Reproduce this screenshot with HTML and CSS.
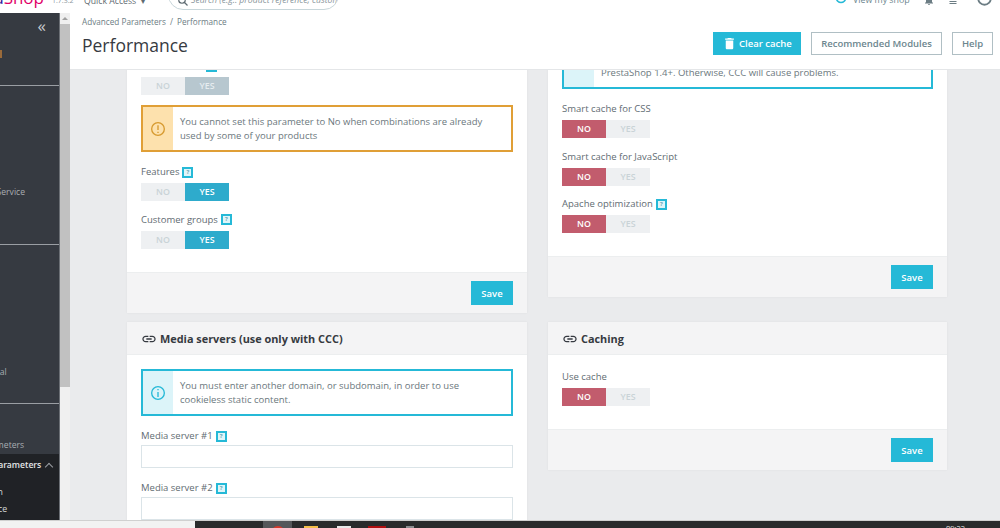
FILE: index.html
```html
<!DOCTYPE html>
<html lang="en">
<head>
<meta charset="utf-8">
<title>Performance</title>
<link rel="stylesheet" href="styles.css">
</head>
<body>
<div class="window">
  <div class="topbar">
    <div class="logo">Presta<span class="logo-pink">Shop</span></div>
    <div class="version">1.7.3.2</div>
    <div class="quick">Quick Access <span class="caret">▾</span></div>
    <div class="search">
      <svg class="search-icon" viewBox="0 0 24 24"><circle cx="10" cy="10" r="6.5"/><path d="M15 15l6 6"/></svg>
      <span class="search-text">Search (e.g.: product reference, custome</span>
    </div>
    <div class="top-right">
      <svg class="view-icon" viewBox="0 0 24 24"><circle cx="12" cy="12" r="9"/></svg>
      <span class="view-text">View my shop</span>
      <svg class="bell-icon" viewBox="0 0 24 24"><path d="M12 22a2 2 0 0 0 2-2h-4a2 2 0 0 0 2 2zm6-6v-5c0-3-1.6-5.600-4.500-6.300V2h-3v2.700C7.600 5.400 6 8 6 11v5l-2 2v1h16v-1z"/></svg>
      <svg class="user-icon" viewBox="0 0 24 24"><circle cx="12" cy="7" r="4"/><path d="M5 14h14v2H5zM5 18h14v2H5z"/></svg>
      <svg class="account-icon" viewBox="0 0 24 24"><circle cx="12" cy="12" r="10"/></svg>
    </div>
  </div>

  <div class="work">
    <aside class="sidebar">
      <div class="nav-sec nav-sec-first">
        <div class="collapse">«</div>
        <div class="dash-dot"></div>
      </div>
      <div class="nav-sec nav-sec-sell">
        <div class="nav-item">Orders</div>
        <div class="nav-item">Catalog</div>
        <div class="nav-item">Customers</div>
        <div class="nav-item">Customer Service</div>
        <div class="nav-item">Stats</div>
      </div>
      <div class="nav-sec nav-sec-improve">
        <div class="nav-item">Modules</div>
        <div class="nav-item">Design</div>
        <div class="nav-item">Shipping</div>
        <div class="nav-item">Payment</div>
        <div class="nav-item">International</div>
      </div>
      <div class="nav-config">
        <div class="nav-item">Shop Parameters</div>
        <div class="nav-active">
          <div class="nav-parent">Advanced Parameters <span class="chev"></span></div>
          <div class="nav-sub nav-sub-first">Information</div>
          <div class="nav-sub">Performance</div>
        </div>
      </div>
    </aside>

    <div class="scrollbar">
      <div class="scroll-up"></div>
      <div class="scroll-thumb"></div>
    </div>

    <div class="page">
      <header class="head">
        <div class="head-left">
          <div class="crumbs">Advanced Parameters <span class="crumb-sep">/</span> Performance</div>
          <h1 class="title">Performance</h1>
        </div>
        <div class="head-actions">
          <button class="btn btn-clear"><svg class="trash" viewBox="0 0 24 24"><path d="M6 19c0 1.100.9 2 2 2h8c1.100 0 2-.9 2-2V7H6v12zM19 4h-3.500l-1-1h-5l-1 1H5v2h14V4z"/></svg>Clear cache</button>
          <button class="btn btn-outline btn-modules">Recommended Modules</button>
          <button class="btn btn-outline btn-help">Help</button>
        </div>
      </header>

      <main class="columns">
        <div class="col col-left">
          <section class="card card-features">
            <div class="card-body">
              <div class="field">
                <div class="label">Combinations <span class="help">?</span></div>
                <div class="toggle"><span class="opt">NO</span><span class="opt opt-muted">YES</span></div>
              </div>
              <div class="alert alert-warn">
                <div class="alert-side"><svg class="alert-icon" viewBox="0 0 24 24"><circle cx="12" cy="12" r="9.500"/><path d="M12 6.500v7M12 16v2"/></svg></div>
                <p class="alert-text">You cannot set this parameter to No when combinations are already used by some of your products</p>
              </div>
              <div class="field">
                <div class="label">Features <span class="help">?</span></div>
                <div class="toggle"><span class="opt">NO</span><span class="opt opt-yes">YES</span></div>
              </div>
              <div class="field">
                <div class="label">Customer groups <span class="help">?</span></div>
                <div class="toggle"><span class="opt">NO</span><span class="opt opt-yes">YES</span></div>
              </div>
            </div>
            <div class="card-foot"><button class="save">Save</button></div>
          </section>

          <section class="card">
            <h2 class="card-head"><svg class="link" viewBox="0 0 24 24"><path d="M3.900 12c0-1.710 1.390-3.100 3.100-3.100h4V7H7c-2.760 0-5 2.240-5 5s2.240 5 5 5h4v-1.900H7c-1.710 0-3.100-1.390-3.100-3.100zM8 13h8v-2H8v2zm9-6h-4v1.900h4c1.710 0 3.100 1.390 3.100 3.100s-1.390 3.100-3.100 3.100h-4V17h4c2.760 0 5-2.240 5-5s-2.240-5-5-5z"/></svg>Media servers (use only with CCC)</h2>
            <div class="card-body card-body-open">
              <div class="alert alert-info alert-first">
                <div class="alert-side"><svg class="alert-icon" viewBox="0 0 24 24"><circle cx="12" cy="12" r="9.500"/><path d="M12 10.500V18M12 6v2"/></svg></div>
                <p class="alert-text">You must enter another domain, or subdomain, in order to use cookieless static content.</p>
              </div>
              <div class="field field-input">
                <div class="label">Media server #1 <span class="help">?</span></div>
                <input class="input" type="text">
              </div>
              <div class="field field-input">
                <div class="label">Media server #2 <span class="help">?</span></div>
                <input class="input" type="text">
              </div>
            </div>
          </section>
        </div>

        <div class="col col-right">
          <section class="card card-ccc">
            <div class="card-body">
              <div class="alert alert-info">
                <div class="alert-side"></div>
                <p class="alert-text">Make sure, however, that your theme is compatible with<br>PrestaShop 1.4+. Otherwise, CCC will cause problems.</p>
              </div>
              <div class="field">
                <div class="label">Smart cache for CSS</div>
                <div class="toggle"><span class="opt opt-no">NO</span><span class="opt">YES</span></div>
              </div>
              <div class="field">
                <div class="label">Smart cache for JavaScript</div>
                <div class="toggle"><span class="opt opt-no">NO</span><span class="opt">YES</span></div>
              </div>
              <div class="field">
                <div class="label">Apache optimization <span class="help">?</span></div>
                <div class="toggle"><span class="opt opt-no">NO</span><span class="opt">YES</span></div>
              </div>
            </div>
            <div class="card-foot"><button class="save">Save</button></div>
          </section>

          <section class="card">
            <h2 class="card-head"><svg class="link" viewBox="0 0 24 24"><path d="M3.900 12c0-1.710 1.390-3.100 3.100-3.100h4V7H7c-2.760 0-5 2.240-5 5s2.240 5 5 5h4v-1.900H7c-1.710 0-3.100-1.390-3.100-3.100zM8 13h8v-2H8v2zm9-6h-4v1.900h4c1.710 0 3.100 1.390 3.100 3.100s-1.390 3.100-3.100 3.100h-4V17h4c2.760 0 5-2.240 5-5s-2.240-5-5-5z"/></svg>Caching</h2>
            <div class="card-body card-body-caching">
              <div class="field">
                <div class="label">Use cache</div>
                <div class="toggle"><span class="opt opt-no">NO</span><span class="opt">YES</span></div>
              </div>
            </div>
            <div class="card-foot"><button class="save">Save</button></div>
          </section>
        </div>
      </main>
    </div>
  </div>

  <div class="statusline">
    <div class="status-blank"></div>
    <div class="taskbar">
      <div class="task task-active"><span class="dot-red"></span></div>
      <div class="task"><span class="tile tile-yellow"></span></div>
      <div class="task"><span class="tile tile-white"></span></div>
      <div class="task"><span class="tile tile-red"></span></div>
      <div class="task"><span class="tile tile-grey"></span></div>
      <div class="clock">09:22</div>
    </div>
  </div>
</div>
</body>
</html>
```

FILE: styles.css
```css
* { box-sizing: border-box; }
html, body { margin: 0; padding: 0; }
body { background: #fff; font-family: "Open Sans", "Noto Sans", sans-serif; color: #5f6b72; }
.window { width: 1000px; height: 528px; display: flex; flex-direction: column; overflow: hidden; }

/* top bar, cut by the top edge of the capture */
.topbar { height: 13px; flex: none; display: flex; align-items: flex-end; overflow: hidden; background: #fff; white-space: nowrap; }
.logo { flex: none; width: 52px; height: 22px; line-height: 22px; display: flex; justify-content: flex-end; padding-right: 8px; font-size: 17px; font-family: "Open Sans", sans-serif; color: #34219e; overflow: hidden; position: relative; top: -4px; }
.logo-pink { color: #df0067; }
.version { flex: none; width: 32px; font-size: 7px; color: #8a969c; line-height: 12px; position: relative; top: -6px; }
.quick { flex: none; width: 84px; font-size: 8.700px; color: #5f6b72; line-height: 12px; position: relative; top: -6px; }
.caret { font-size: 8px; margin-left: 2px; }
.search { flex: none; width: 171px; height: 30px; display: flex; align-items: flex-end; padding: 0 0 3px 8px; border: 1px solid #c8d6da; border-radius: 15px; position: relative; top: -3px; overflow: hidden; }
.search-icon { width: 12px; height: 12px; flex: none; fill: none; stroke: #5f6b72; stroke-width: 2.4; margin-right: 2px; margin-bottom: -1px; }
.search-text { font-size: 8.700px; font-style: italic; color: #8b979d; line-height: 12px; }
.top-right { flex: none; width: 661px; display: flex; align-items: center; height: 12px; position: relative; top: -7px; }
.view-icon { width: 12px; height: 12px; margin-left: 496px; margin-top: -5px; fill: none; stroke: #25b9d7; stroke-width: 3.4; }
.view-text { font-size: 8.800px; color: #6c868e; margin-left: 6px; width: 70px; }
.bell-icon { width: 12px; height: 12px; fill: #6c7d84; }
.user-icon { width: 12px; height: 12px; fill: #6c7d84; margin-left: 12px; }
.account-icon { width: 15px; height: 15px; fill: none; stroke: #6c7d84; stroke-width: 3; margin-left: 18px; margin-top: -4px; }

/* working area */
.work { flex: none; height: 507px; display: flex; }

.sidebar { flex: none; width: 60px; background: #363a41; overflow: hidden; display: flex; flex-direction: column; white-space: nowrap; border-right: 1px solid #6b6f75; }
.nav-sec { flex: none; border-bottom: 1px solid #9a9ea3; }
.nav-sec-first { height: 73px; }
.collapse { text-align: right; padding-right: 13px; font-size: 17px; line-height: 26px; height: 28px; color: #c6cace; }
.dash-dot { width: 2px; height: 8px; margin-top: 9px; background: #9a6a3a; }
.nav-sec-sell { height: 159px; padding-top: 12px; }
.nav-sec-improve { height: 159px; padding-top: 6px; }
.nav-item { height: 27px; line-height: 27px; margin-left: -45px; font-size: 8.600px; color: #a9adb1; }
.nav-config { flex: 1; padding-top: 28px; display: flex; flex-direction: column; }
.nav-active { flex: 1; background: #202226; margin-top: -5px; padding-top: 1px; }
.nav-parent { height: 20px; line-height: 20px; margin-left: -50px; font-size: 8.600px; font-weight: 600; color: #e4e6e8; display: flex; align-items: center; gap: 5px; }
.chev { width: 6px; height: 6px; border-top: 1px solid #9a9ea3; border-left: 1px solid #9a9ea3; transform: rotate(45deg); margin-top: 3px; flex: none; }
.nav-sub { height: 17px; line-height: 17px; margin-left: -46px; font-size: 8.800px; color: #d6d8da; }
.nav-sub-first { margin-top: 9px; }

.scrollbar { flex: none; width: 10px; background: #f0f0f0; display: flex; flex-direction: column; }
.scroll-up { height: 11px; background: #efefef; }
.scroll-up::before { content: ""; display: block; width: 0; height: 0; margin: 4px auto 0; border-left: 3px solid transparent; border-right: 3px solid transparent; border-bottom: 3px solid #a0a0a0; }
.scroll-thumb { height: 363px; background: #c1c1c1; }

.page { flex: 1; min-width: 0; display: flex; flex-direction: column; background: #eaebed; }
.head { flex: none; height: 57px; background: #fff; display: flex; justify-content: space-between; padding: 0 7px 0 12px; border-bottom: 1px solid #e4e6e8; position: relative; z-index: 1; }
.head-left { padding-top: 2px; }
.crumbs { font-size: 8.200px; line-height: 14px; color: #6c7d84; }
.crumb-sep { margin: 0 2px; }
.title { margin: 3px 0 0; font-size: 17.500px; line-height: 26px; font-weight: 400; color: #363a41; }
.head-actions { display: flex; gap: 10px; padding-top: 19px; }
.btn { height: 23px; padding: 0 10px; font-family: inherit; font-size: 9.500px; font-weight: 600; display: flex; align-items: center; border-radius: 0; white-space: nowrap; }
.btn-clear { width: 88px; padding: 0 0 0 9px; background: #25b9d7; border: 0; color: #fff; }
.btn-modules { width: 131px; padding: 0; justify-content: center; }
.btn-help { width: 41px; padding: 0; justify-content: center; }
.trash { width: 15px; height: 15px; fill: #fff; flex: none; margin-right: 2px; }
.btn-outline { background: #fff; border: 1px solid #b0bfc4; color: #6c868e; }

.columns { flex: 1; min-height: 0; overflow: hidden; display: grid; grid-template-columns: 400px 399px; column-gap: 21px; align-items: start; padding-left: 57px; }
.col { display: flex; flex-direction: column; }
.col-left { margin-top: -14px; }
.col-right { margin-top: -28px; }
.card { background: #fff; box-shadow: 0 0 2px rgba(0,0,0,.06); flex: none; }
.card-features { margin-bottom: 9px; }
.card-ccc { margin-bottom: 25px; }
.card-head { margin: 0; height: 33px; display: flex; align-items: center; padding: 1px 0 0 14px; background: #f4f4f5; border-bottom: 1px solid #eceeef; font-size: 10.900px; font-weight: 700; color: #363a41; }
.link { width: 16px; height: 16px; margin-right: 3px; fill: #363a41; flex: none; }
.card-body { padding: 12px 14px 15px; }
.card-features .card-body { padding-top: 0; padding-bottom: 15px; }
.card-ccc .card-body { padding-top: 0; padding-bottom: 14.500px; }
.card-body-caching { padding-bottom: 14.500px; }
.card-body-open { padding-bottom: 60px; }
.card-foot { height: 41px; background: #f4f4f5; border-top: 1px solid #eceeef; display: flex; justify-content: flex-end; align-items: flex-start; padding: 8px 14px 0 0; }
.save { width: 42px; height: 24px; border: 0; background: #25b9d7; color: #fff; font-family: inherit; font-size: 9.500px; font-weight: 600; padding: 0; }

.field { margin-bottom: 8.500px; }
.label { height: 18px; line-height: 17px; padding-top: 1px; margin-bottom: 3px; font-size: 9.500px; color: #5f6b72; white-space: nowrap; display: flex; align-items: center; gap: 3px; }
.help { flex: none; width: 11px; height: 11px; border: 2px solid #25b9d7; background: #dff5f9; color: #6aa8b8; font-size: 6px; line-height: 7px; text-align: center; font-weight: 700; margin-top: 1px; }
.toggle { width: 88px; height: 18px; display: flex; }
.opt { flex: 1; display: flex; align-items: center; justify-content: center; background: #eef0f2; color: #c9d3d7; font-size: 8.800px; font-weight: 600; }
.opt-yes { background: #2eabcc; color: #fff; }
.opt-muted { background: #b7c7cf; color: #e6ecef; }
.opt-no { background: #c25c6d; color: #fff; }

.alert { display: flex; height: 47px; border: 2px solid; margin: 10px 0; }
.alert-first { margin-top: 2px; }
.card-ccc .alert { margin-top: 0; }
.alert-warn { border-color: #e09f36; }
.alert-info { border-color: #25b9d7; }
.alert-side { flex: none; width: 30px; display: flex; align-items: center; justify-content: center; }
.alert-warn .alert-side { background: #fde1ad; }
.alert-info .alert-side { background: #dcf4f9; }
.alert-icon { width: 16px; height: 16px; fill: none; stroke-width: 2; }
.alert-warn .alert-icon { stroke: #d79a2f; }
.alert-info .alert-icon { stroke: #25b9d7; }
.alert-text { margin: 0; padding: 8px 8px 0 7px; font-size: 9.500px; line-height: 14px; color: #6b777d; }

.field-input { margin-bottom: 10px; }
.field-input .label { margin-bottom: 1px; }
.input { display: block; width: 100%; height: 23px; border: 1.500px solid #dbe4e8; background: #fff; padding: 0; }

/* bottom strip */
.statusline { flex: 1; display: flex; border-top: 1px solid #d0d0d0; overflow: hidden; }
.status-blank { flex: none; width: 195px; background: #f2f2f2; }
.taskbar { flex: 1; background: #2a2b2c; display: flex; padding-left: 68px; }
.task { flex: none; width: 29px; margin-right: 4px; height: 8px; display: flex; justify-content: center; overflow: hidden; }
.task-active { background: #55575a; }
.dot-red { width: 14px; height: 14px; border-radius: 50%; background: #d8392b; margin-top: 5px; }
.tile { width: 14px; height: 12px; margin-top: 5px; }
.tile-yellow { background: #f5c04a; }
.tile-white { background: #e8e8e8; }
.tile-red { background: #b00e10; width: 18px; }
.tile-grey { background: #8b8d90; width: 8px; }
.clock { margin-left: auto; margin-right: 35px; font-size: 7.500px; line-height: 10px; color: #e8e8e8; margin-top: 2px; }
```
